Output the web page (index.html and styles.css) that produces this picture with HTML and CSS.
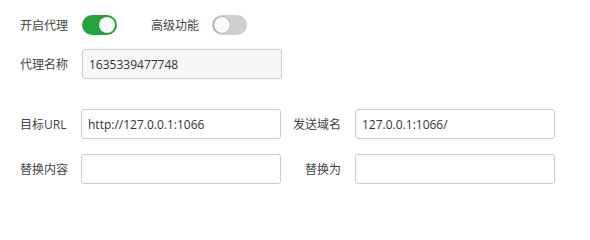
FILE: index.html
```html
<!DOCTYPE html>
<html lang="zh-CN">
<head>
<meta charset="utf-8">
<link rel="stylesheet" href="styles.css">
</head>
<body>
<div class="form">
  <div class="row-switch">
    <span class="label">开启代理</span>
    <span class="switch on"><span class="knob"></span></span>
    <span class="label2">高级功能</span>
    <span class="switch off"><span class="knob"></span></span>
  </div>
  <div class="row-name">
    <span class="label">代理名称</span>
    <div class="input filled">1635339477748</div>
  </div>
  <div class="grid">
    <span class="label">目标URL</span>
    <div class="input">http://127.0.0.1:1066</div>
    <span class="rlabel">发送域名</span>
    <div class="input">127.0.0.1:1066/</div>
    <span class="label">替换内容</span>
    <div class="input"></div>
    <span class="rlabel">替换为</span>
    <div class="input"></div>
  </div>
</div>
</body>
</html>
```
FILE: styles.css
```css
html, body {
  margin: 0;
  padding: 0;
  background: #ffffff;
}
body {
  font-family: "Open Sans", "Noto Sans CJK SC", sans-serif;
  font-size: 12px;
  color: #3c3c3c;
}
.form {
  padding: 15px 0 0 20px;
}
.row-switch {
  display: flex;
  align-items: center;
  height: 20px;
}
.label {
  width: 62px;
  flex: none;
  color: #444;
}
.label2 {
  margin-left: 34px;
  width: 61px;
  color: #444;
}
.switch {
  position: relative;
  width: 35px;
  height: 20px;
  border-radius: 10px;
  box-sizing: border-box;
  flex: none;
}
.switch.on {
  background: #22a33b;
}
.switch.off {
  background: #cfcfcf;
}
.knob {
  position: absolute;
  top: 2px;
  width: 16px;
  height: 16px;
  border-radius: 50%;
  background: #fafafa;
  box-shadow: 0 0 1px rgba(0,0,0,0.4);
}
.switch.on .knob { right: 2px; }
.switch.off .knob { left: 2px; box-shadow: 0 0 1px rgba(0,0,0,0.5), -1px 0 1px rgba(0,0,0,0.2); }
.row-name {
  display: flex;
  align-items: center;
  margin-top: 14px;
}
.input {
  width: 200px;
  height: 30px;
  box-sizing: border-box;
  border: 1px solid #cccccc;
  border-radius: 3px;
  padding: 0 6px;
  display: flex;
  align-items: center;
  color: #333;
  font-size: 12px;
  background: #fff;
}
.input.filled {
  background: #f7f7f7;
}
.grid {
  display: grid;
  grid-template-columns: 61px 200px 74px 200px;
  row-gap: 15px;
  align-items: center;
  margin-top: 30px;
}
.rlabel {
  text-align: right;
  padding-right: 14px;
  color: #444;
}
```
